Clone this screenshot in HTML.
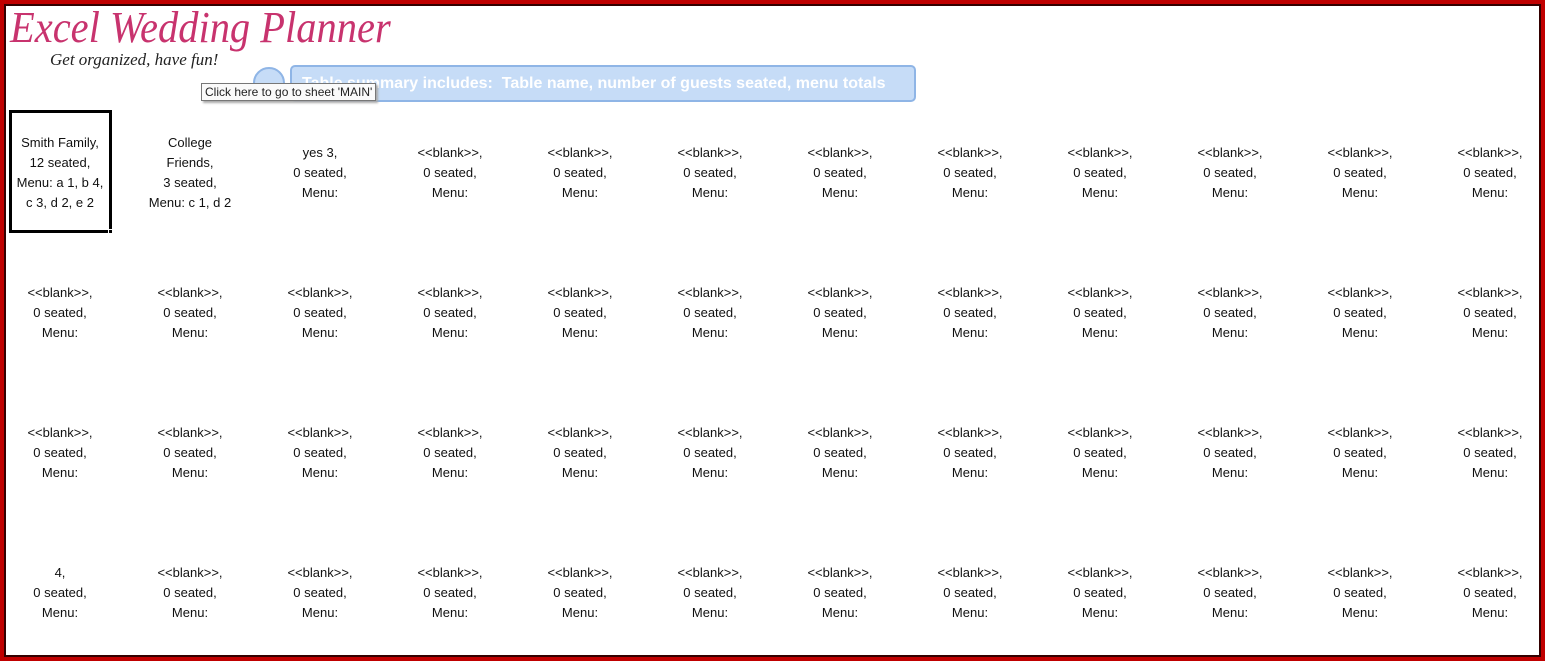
<!DOCTYPE html>
<html><head><meta charset="utf-8"><style>
*{margin:0;padding:0;box-sizing:border-box}
body{width:1545px;height:661px;overflow:hidden;background:#c00000;position:relative;font-family:"Liberation Sans",sans-serif}
#inner{position:absolute;left:4px;top:4px;width:1537px;height:653px;border:2px solid #300;background:#fff}
.c{position:absolute;width:130px;text-align:center;font-size:13px;line-height:20px;color:#111;transform:translateY(-50%)}
.logo{position:absolute;left:10px;top:2px;font-family:"Liberation Serif",serif;font-style:italic;font-size:44px;color:#c8336e;transform:scaleX(0.92);transform-origin:left}
.tag{position:absolute;left:50px;top:50px;font-family:"Liberation Serif",serif;font-style:italic;font-size:17px;color:#222}
.banner{position:absolute;left:290px;top:65px;width:626px;height:37px;background:#c6dcf7;border:2px solid #8fb5e6;border-radius:5px;color:#fff;font-weight:bold;font-size:16px;line-height:33px;padding-left:10px;white-space:nowrap}
.circ{position:absolute;left:253px;top:67px;width:32px;height:32px;border-radius:50%;background:#c6dcf7;border:2px solid #8fb5e6}
.tip{position:absolute;left:201px;top:83px;height:18px;padding:0 3px;background:#fafafa;border:1px solid #777;font-size:12px;line-height:16px;color:#222;box-shadow:2px 2px 2px #aaa}
.sel{position:absolute;left:9px;top:110px;width:103px;height:123px;border:3px solid #000}
.h{position:absolute;left:108px;top:229px;width:5px;height:5px;background:#000;border:1px solid #fff}
</style></head><body>
<div id="inner"></div>
<div class="logo">Excel Wedding Planner</div>
<div class="tag">Get organized, have fun!</div>
<div class="circ"></div>
<div class="banner">Table summary includes:&nbsp; Table name, number of guests seated, menu totals</div>
<div class="tip">Click here to go to sheet 'MAIN'</div>
<div class="sel"></div><div class="h"></div>
<div id="g"></div>
<script>
var g=document.getElementById('g'),h='';
var rows=[173,313,453,593];
for(var r=0;r<4;r++)for(var c=0;c<12;c++){
 var t='&lt;&lt;blank&gt;&gt;,<br>0 seated,<br>Menu:';
 if(r==0&&c==0)t='Smith Family,<br>12 seated,<br>Menu: a 1, b 4,<br>c 3, d 2, e 2';
 if(r==0&&c==1)t='College<br>Friends,<br>3 seated,<br>Menu: c 1, d 2';
 if(r==0&&c==2)t='yes 3,<br>0 seated,<br>Menu:';
 if(r==3&&c==0)t='4,<br>0 seated,<br>Menu:';
 h+='<div class="c" style="left:'+(-5+c*130)+'px;top:'+rows[r]+'px">'+t+'</div>';
}
g.innerHTML=h;
</script>
</body></html>
